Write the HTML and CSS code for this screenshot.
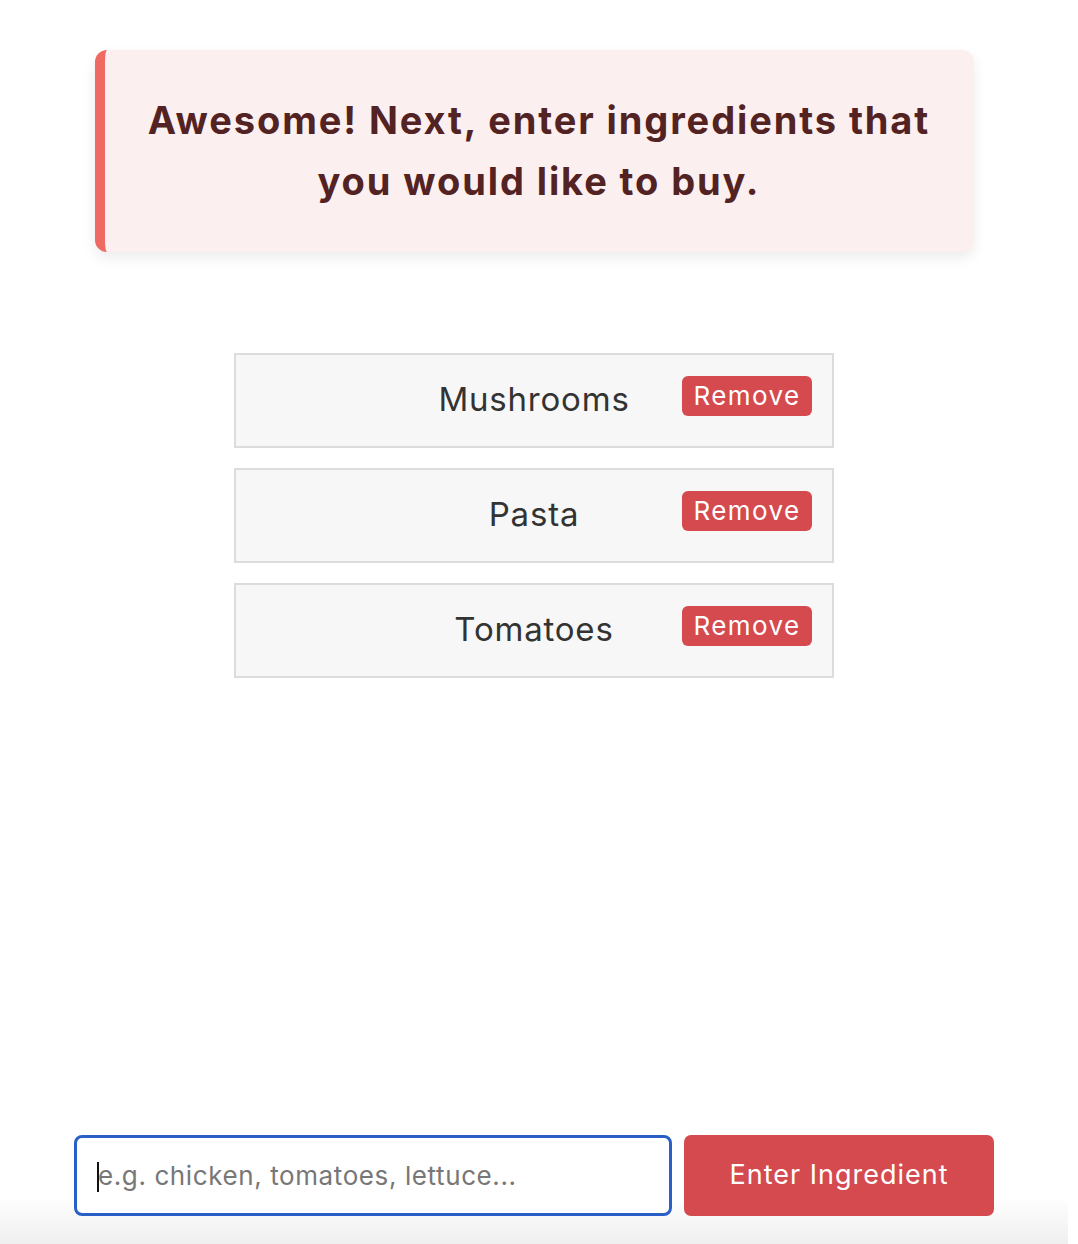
FILE: index.html
```html
<!DOCTYPE html>
<html lang="en">
<head>
<meta charset="utf-8">
<title>Shopping List</title>
<link rel="stylesheet" href="styles.css">
</head>
<body>
<div class="page">
  <main class="main">
    <section class="banner">
      <h2 class="banner-text">Awesome! Next, enter ingredients that you would like to buy.</h2>
    </section>
    <ul class="list">
      <li class="item"><span class="item-name">Mushrooms</span><button class="remove">Remove</button></li>
      <li class="item"><span class="item-name">Pasta</span><button class="remove">Remove</button></li>
      <li class="item"><span class="item-name">Tomatoes</span><button class="remove">Remove</button></li>
    </ul>
  </main>
  <footer class="footer">
    <form class="entry">
      <div class="field"><span class="caret"></span><input class="input" type="text" placeholder="e.g. chicken, tomatoes, lettuce..."></div>
      <button class="submit" type="button">Enter Ingredient</button>
    </form>
  </footer>
</div>
</body>
</html>
```
FILE: styles.css
```css
* { box-sizing: border-box; }
html, body { margin: 0; padding: 0; background: #fff; }
body {
  font-family: "Inter", "Liberation Sans", sans-serif;
  color: #333;
}
.page {
  min-height: 1244px;
  display: flex;
  flex-direction: column;
  padding-right: 10px;
}
.main {
  flex: 1;
  display: flex;
  flex-direction: column;
  align-items: center;
  padding-top: 50px;
}
.banner {
  width: 879px;
  height: 202px;
  background: #fcefef;
  border-left: 10px solid #ef6a63;
  border-radius: 12px;
  box-shadow: 0 6px 14px rgba(0,0,0,0.08);
  display: flex;
  align-items: center;
  justify-content: center;
  padding: 0 24px;
}
.banner-text {
  margin: 0;
  font-size: 38px;
  letter-spacing: 1.9px;
  line-height: 61px;
  font-weight: 700;
  color: #522322;
  text-align: center;
}
.list {
  list-style: none;
  margin: 101px 0 0;
  padding: 0;
  display: flex;
  flex-direction: column;
  gap: 20px;
}
.item {
  width: 600px;
  height: 95px;
  background: #f7f7f7;
  border: 2px solid #dcdcdc;
  display: grid;
  grid-template-columns: 1fr auto 1fr;
  padding: 21px 20px 0;
}
.item-name {
  grid-column: 2;
  font-size: 33px;
  letter-spacing: 0.8px;
  line-height: 48px;
  color: #333;
  align-self: start;
  margin-top: -1px;
}
.remove {
  grid-column: 3;
  justify-self: end;
  align-self: start;
  width: 130px;
  height: 40px;
  border: none;
  border-radius: 6px;
  background: #d44a4e;
  color: #fff;
  font-family: inherit;
  font-size: 26px;
  letter-spacing: 1.4px;
  padding: 0;
  line-height: 38px;
}
.footer {
  height: 134px;
  padding-top: 25px;
  background: linear-gradient(to bottom, #fff 0%, #fff 65%, #efefef 100%);
  display: flex;
  justify-content: center;
}
.entry {
  display: flex;
  gap: 12px;
  height: 81px;
}
.field {
  position: relative;
  width: 598px;
  height: 81px;
  border: 3px solid #2a5fc8;
  border-radius: 8px;
  background: #fff;
}
.input {
  width: 100%;
  height: 100%;
  border: none;
  outline: none;
  background: transparent;
  padding: 0 0 0 21px;
  font-family: inherit;
  font-size: 26px;
  letter-spacing: 0.6px;
  color: #333;
}
.input::placeholder { color: #777; }
.caret {
  position: absolute;
  left: 20px;
  top: 24px;
  width: 2px;
  height: 30px;
  background: #111;
}
.submit {
  width: 310px;
  height: 81px;
  border: none;
  border-radius: 7px;
  background: #d44a4e;
  color: #fff;
  font-family: inherit;
  font-size: 27px;
  letter-spacing: 1px;
  padding: 0 0 2px;
}
```
